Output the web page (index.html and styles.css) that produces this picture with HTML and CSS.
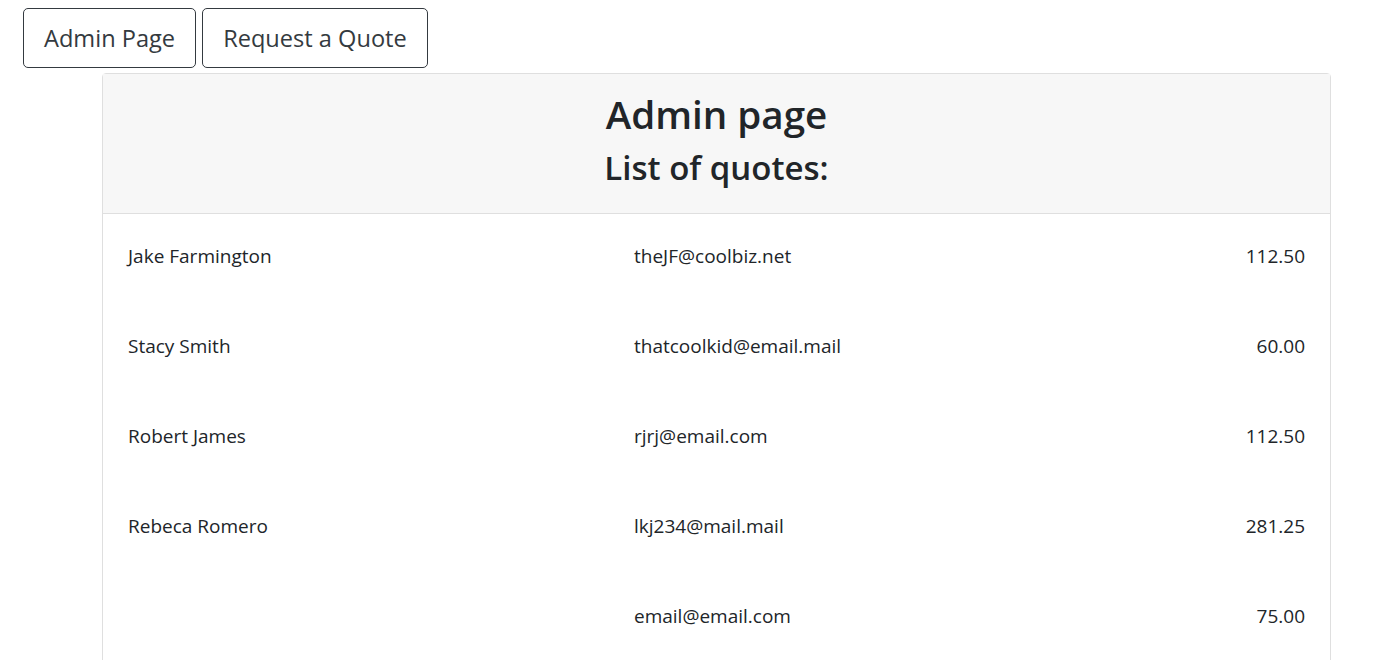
FILE: index.html
```html
<!DOCTYPE html>
<html>
<head>
<meta charset="utf-8">
<link rel="stylesheet" href="styles.css">
</head>
<body>
<nav class="nav">
  <button class="btn">Admin Page</button>
  <button class="btn">Request a Quote</button>
</nav>
<div class="card">
  <div class="card-header">
    <h1 class="title">Admin page</h1>
    <h2 class="subtitle">List of quotes:</h2>
  </div>
  <div class="card-body">
    <div class="row"><span class="name">Jake Farmington</span><span class="email">theJF@coolbiz.net</span><span class="amount">112.50</span></div>
    <div class="row"><span class="name">Stacy Smith</span><span class="email">thatcoolkid@email.mail</span><span class="amount">60.00</span></div>
    <div class="row"><span class="name">Robert James</span><span class="email">rjrj@email.com</span><span class="amount">112.50</span></div>
    <div class="row"><span class="name">Rebeca Romero</span><span class="email">lkj234@mail.mail</span><span class="amount">281.25</span></div>
    <div class="row"><span class="name"></span><span class="email">email@email.com</span><span class="amount">75.00</span></div>
  </div>
</div>
</body>
</html>
```
FILE: styles.css
```css
html, body {
  margin: 0;
  padding: 0;
  background: #fff;
  color: #212529;
  font-family: "Open Sans", "Noto Sans", sans-serif;
}
.nav {
  display: flex;
  gap: 6px;
  padding: 8px 0 0 23px;
  height: 60px;
}
.btn {
  height: 60px;
  padding: 0 20px;
  border: 1px solid #343a40;
  border-radius: 5px;
  background: #fff;
  color: #343a40;
  font-family: inherit;
  font-size: 23.6px;
}
.card {
  margin: 5px 48px 0 102px;
  border: 1px solid #dfdfdf;
  border-radius: 4px;
  height: 600px;
}
.card-header {
  background: #f7f7f7;
  border-bottom: 1px solid #dfdfdf;
  height: 140px;
  display: flex;
  flex-direction: column;
  align-items: center;
  padding-top: 16px;
  box-sizing: border-box;
}
.title {
  margin: 0;
  font-size: 38.6px;
  font-weight: 600;
  line-height: 48px;
}
.subtitle {
  margin: 10px 0 0;
  font-size: 33px;
  font-weight: 600;
  line-height: 40px;
}
.card-body {
  padding: 0 25px;
}
.row {
  display: grid;
  grid-template-columns: 506px 1fr auto;
  padding: 27px 0 33px;
  line-height: 30px;
  font-size: 19px;
}
.amount {
  text-align: right;
}
```
